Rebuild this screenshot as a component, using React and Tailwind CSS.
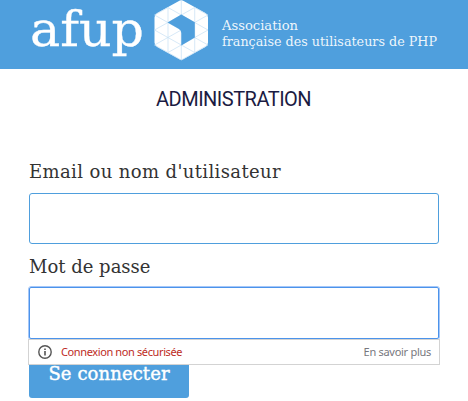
const serif = "font-['DejaVu_Serif',serif]";

function Logo() {
  return (
    <svg className="block h-[69px] w-[468px] shrink-0" viewBox="0 0 468 69">
      <g fill="#fff" className={serif}>
        <text x="30" y="46" fontSize="49" textLength="114" lengthAdjust="spacingAndGlyphs" stroke="#fff" strokeWidth=".3">afup</text>
        <g fontSize="13" fillOpacity="0.92">
          <text x="222" y="30" textLength="76" lengthAdjust="spacingAndGlyphs">Association</text>
          <text x="222" y="45.5" textLength="215" lengthAdjust="spacingAndGlyphs">française des utilisateurs de PHP</text>
        </g>
      </g>
      <path
        d="M178.5 1.2 Q181.3 -.5 184.1 1.2 L205.4 13.1 Q208 14.7 208 17.5 V42.5 Q208 45.3 205.4 46.9 L184.1 58.8 Q181.3 60.5 178.5 58.8 L157.2 46.9 Q154.5 45.3 154.5 42.5 V17.5 Q154.5 14.7 157.2 13.1Z"
        fill="#fff"
      />
      <path
        d="M168 7.5V52.5M181.3 0V60M194.7 7.5V52.5M154.5 15L168 7.5M154.5 30L194.7 7.5M154.5 45L208 15M168 52.5L208 30M181.3 60L208 45M194.7 7.5L208 15M168 7.5L208 30M154.5 15L208 45M154.5 30L194.7 52.5M154.5 45L181.3 60"
        fill="none"
        stroke="#c5dff4"
        strokeWidth=".7"
      />
      <path d="M181.3 14.5L194.8 22.2V37.6L181.3 45.4V33Q181.3 30 178.6 28.7L167.6 22.4Z" fill="#4f9fdd" />
    </svg>
  );
}

function InfoIcon() {
  return (
    <svg className="size-[14px]" viewBox="0 0 14 14" fill="none" stroke="#555">
      <circle cx="7" cy="7" r="6.2" strokeWidth="1.4" />
      <path d="M7 6v4.6M7 3.4v1.5" strokeWidth="1.6" />
    </svg>
  );
}

export default function App() {
  return (
    <div className="h-[401px] w-[468px] overflow-hidden bg-white">
      <header className="h-[69px] bg-[#4f9fdd]">
        <Logo />
      </header>
      <h1 className="mt-[18px] h-6 pl-[156px] font-['Roboto',sans-serif] text-[20px] leading-[25px] font-normal tracking-[-0.5px] whitespace-nowrap text-[#1b1b42]">
        ADMINISTRATION
      </h1>
      <form className="ml-[28px] w-[412px]">
        <label className={`${serif} mt-[48px] block h-[34px] pl-px text-[18px] leading-[26px] tracking-[0.38px] whitespace-nowrap text-[#333]`}>
          Email ou nom d'utilisateur
        </label>
        <input className="mx-px block h-[51px] w-[410px] rounded-[3px] border border-[#4f9fdd] outline-none" />
        <label className={`${serif} mt-[10px] block h-[32px] pl-px text-[18px] leading-[26px] whitespace-nowrap text-[#333]`}>
          Mot de passe
        </label>
        <div className="h-[54px] rounded-[3px] border border-[#a5c7f8]">
          <input type="password" className="block h-[52px] w-full rounded-[2px] border border-[#4b93eb] outline-none" />
        </div>
        <div className="-mt-px flex h-[26px] items-center border border-[#d3d3d3] bg-white pr-2 pl-[9px] font-['Noto_Sans',sans-serif] text-[11px]">
          <InfoIcon />
          <span className="ml-[9px] tracking-[-0.38px] text-[#bd2b24]">Connexion non sécurisée</span>
          <span className="ml-auto tracking-[-0.28px] text-[#77777d]">En savoir plus</span>
        </div>
        <button type="button" className={`${serif} ml-px flex h-[33px] w-[160px] items-start justify-center rounded-b-[3px] bg-[#4f9fdd] text-[18px] leading-[17px] tracking-[0.1px] whitespace-nowrap text-white [-webkit-text-stroke:0.4px_white]`}>
          Se connecter
        </button>
      </form>
    </div>
  );
}
